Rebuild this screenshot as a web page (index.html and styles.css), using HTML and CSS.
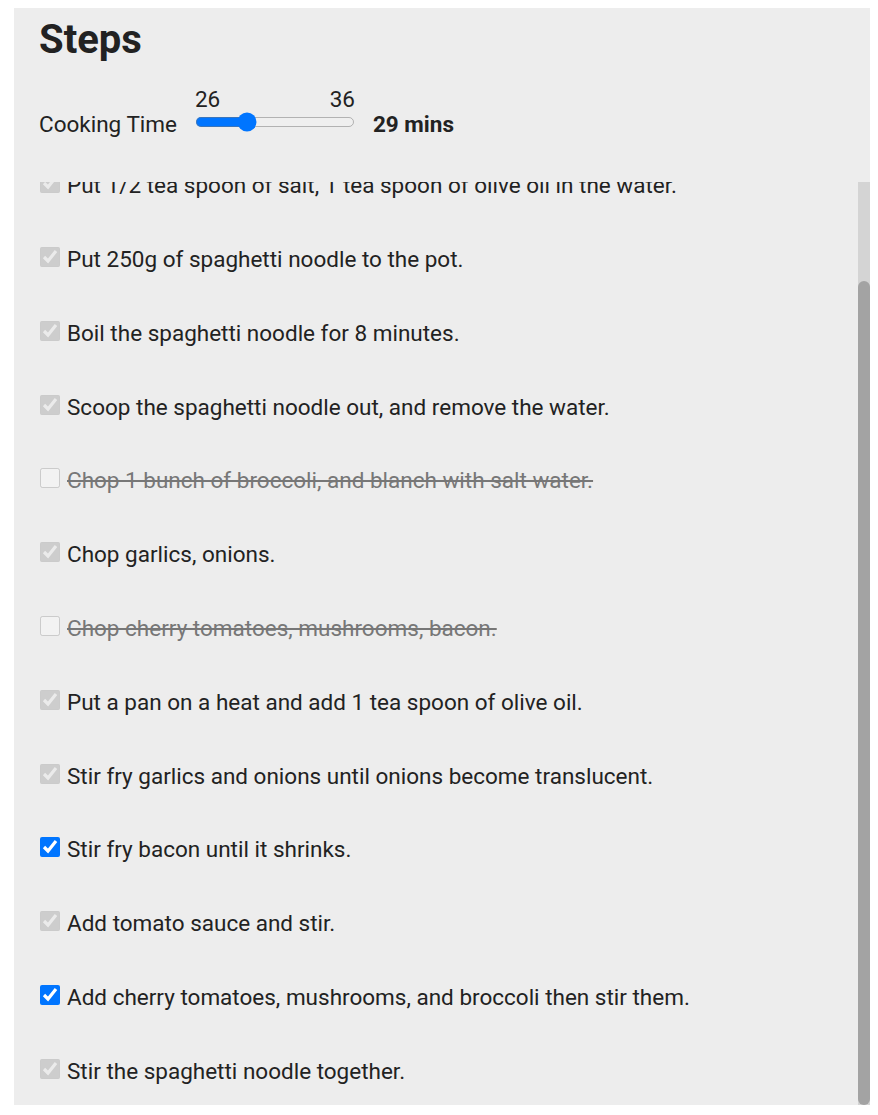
FILE: index.html
```html
<!DOCTYPE html>
<html lang="en">
<head>
<meta charset="utf-8">
<title>Steps</title>
<link rel="stylesheet" href="styles.css">
</head>
<body>
<section class="panel">
  <header class="head">
    <h1 class="title">Steps</h1>
    <div class="time-row">
      <span class="time-label">Cooking Time</span>
      <div class="slider">
        <div class="slider-marks"><span>26</span><span>36</span></div>
        <input class="range" type="range" min="26" max="36" value="29">
      </div>
      <strong class="time-value">29 mins</strong>
    </div>
  </header>
  <div class="body">
    <div class="scroller">
      <ul class="steps">
        <li class="step"><input class="box" type="checkbox" checked disabled><span>Boil water in a large pot.</span></li>
        <li class="step"><input class="box" type="checkbox" checked disabled><span>Put 1/2 tea spoon of salt, 1 tea spoon of olive oil in the water.</span></li>
        <li class="step"><input class="box" type="checkbox" checked disabled><span>Put 250g of spaghetti noodle to the pot.</span></li>
        <li class="step"><input class="box" type="checkbox" checked disabled><span>Boil the spaghetti noodle for 8 minutes.</span></li>
        <li class="step"><input class="box" type="checkbox" checked disabled><span>Scoop the spaghetti noodle out, and remove the water.</span></li>
        <li class="step skipped"><input class="box" type="checkbox" disabled><span>Chop 1 bunch of broccoli, and blanch with salt water.</span></li>
        <li class="step"><input class="box" type="checkbox" checked disabled><span>Chop garlics, onions.</span></li>
        <li class="step skipped"><input class="box" type="checkbox" disabled><span>Chop cherry tomatoes, mushrooms, bacon.</span></li>
        <li class="step"><input class="box" type="checkbox" checked disabled><span>Put a pan on a heat and add 1 tea spoon of olive oil.</span></li>
        <li class="step"><input class="box" type="checkbox" checked disabled><span>Stir fry garlics and onions until onions become translucent.</span></li>
        <li class="step"><input class="box" type="checkbox" checked><span>Stir fry bacon until it shrinks.</span></li>
        <li class="step"><input class="box" type="checkbox" checked disabled><span>Add tomato sauce and stir.</span></li>
        <li class="step"><input class="box" type="checkbox" checked><span>Add cherry tomatoes, mushrooms, and broccoli then stir them.</span></li>
        <li class="step"><input class="box" type="checkbox" checked disabled><span>Stir the spaghetti noodle together.</span></li>
      </ul>
    </div>
    <div class="scrollbar" aria-hidden="true"><div class="thumb"></div></div>
  </div>
</section>
</body>
</html>
```
FILE: styles.css
```css
* { box-sizing: border-box; }
html, body { height: 100%; }
body {
  margin: 0;
  padding: 8px 8px 10px 14px;
  background: #fff;
  font-family: Roboto, "Liberation Sans", sans-serif;
  color: #222;
}
.panel {
  background: #ededed;
  height: 1097px;
  display: flex;
  flex-direction: column;
}
.head {
  padding: 0 25px;
}
.title {
  margin: 8px 0 0;
  font-size: 40px;
  font-weight: 700;
  line-height: 47px;
}
.time-row {
  display: flex;
  align-items: flex-end;
  margin-top: 23px;
  font-size: 22.5px;
  line-height: 26px;
}
.time-label, .time-value { display: block; }
.time-label { margin-right: 18px; }
.time-value { font-weight: 700; margin-left: 18px; }
.slider {
  display: flex;
  flex-direction: column;
  width: 160px;
  padding-bottom: 5px;
}
.slider-marks {
  display: flex;
  justify-content: space-between;
  line-height: 26px;
}
.range {
  display: block;
  margin: 0;
  width: 128px;
  height: 16px;
  zoom: 1.25;
}
.body {
  flex: 1;
  min-height: 0;
  margin-top: 45px;
  display: flex;
}
.scroller {
  flex: 1;
  min-width: 0;
  overflow-y: auto;
  scrollbar-width: none;
  display: flex;
  flex-direction: column-reverse;
}
.scrollbar {
  width: 12px;
  flex: none;
  background: #d4d4d4;
  display: flex;
  flex-direction: column;
  padding-top: 99px;
}
.thumb {
  flex: 1;
  background: #a3a3a3;
  border-radius: 6px;
}
.steps {
  list-style: none;
  margin: 0;
  padding: 0 0 0 25px;
}
.step {
  display: flex;
  align-items: baseline;
  gap: 7px;
  padding: 26.5px 0 20.9px;
  font-size: 22.5px;
  line-height: 26.4px;
}
.box {
  width: 20px;
  height: 20px;
  margin: 0 0 1px 1px;
  flex: none;
}
.skipped span {
  color: #777;
  text-decoration: line-through;
}
```
